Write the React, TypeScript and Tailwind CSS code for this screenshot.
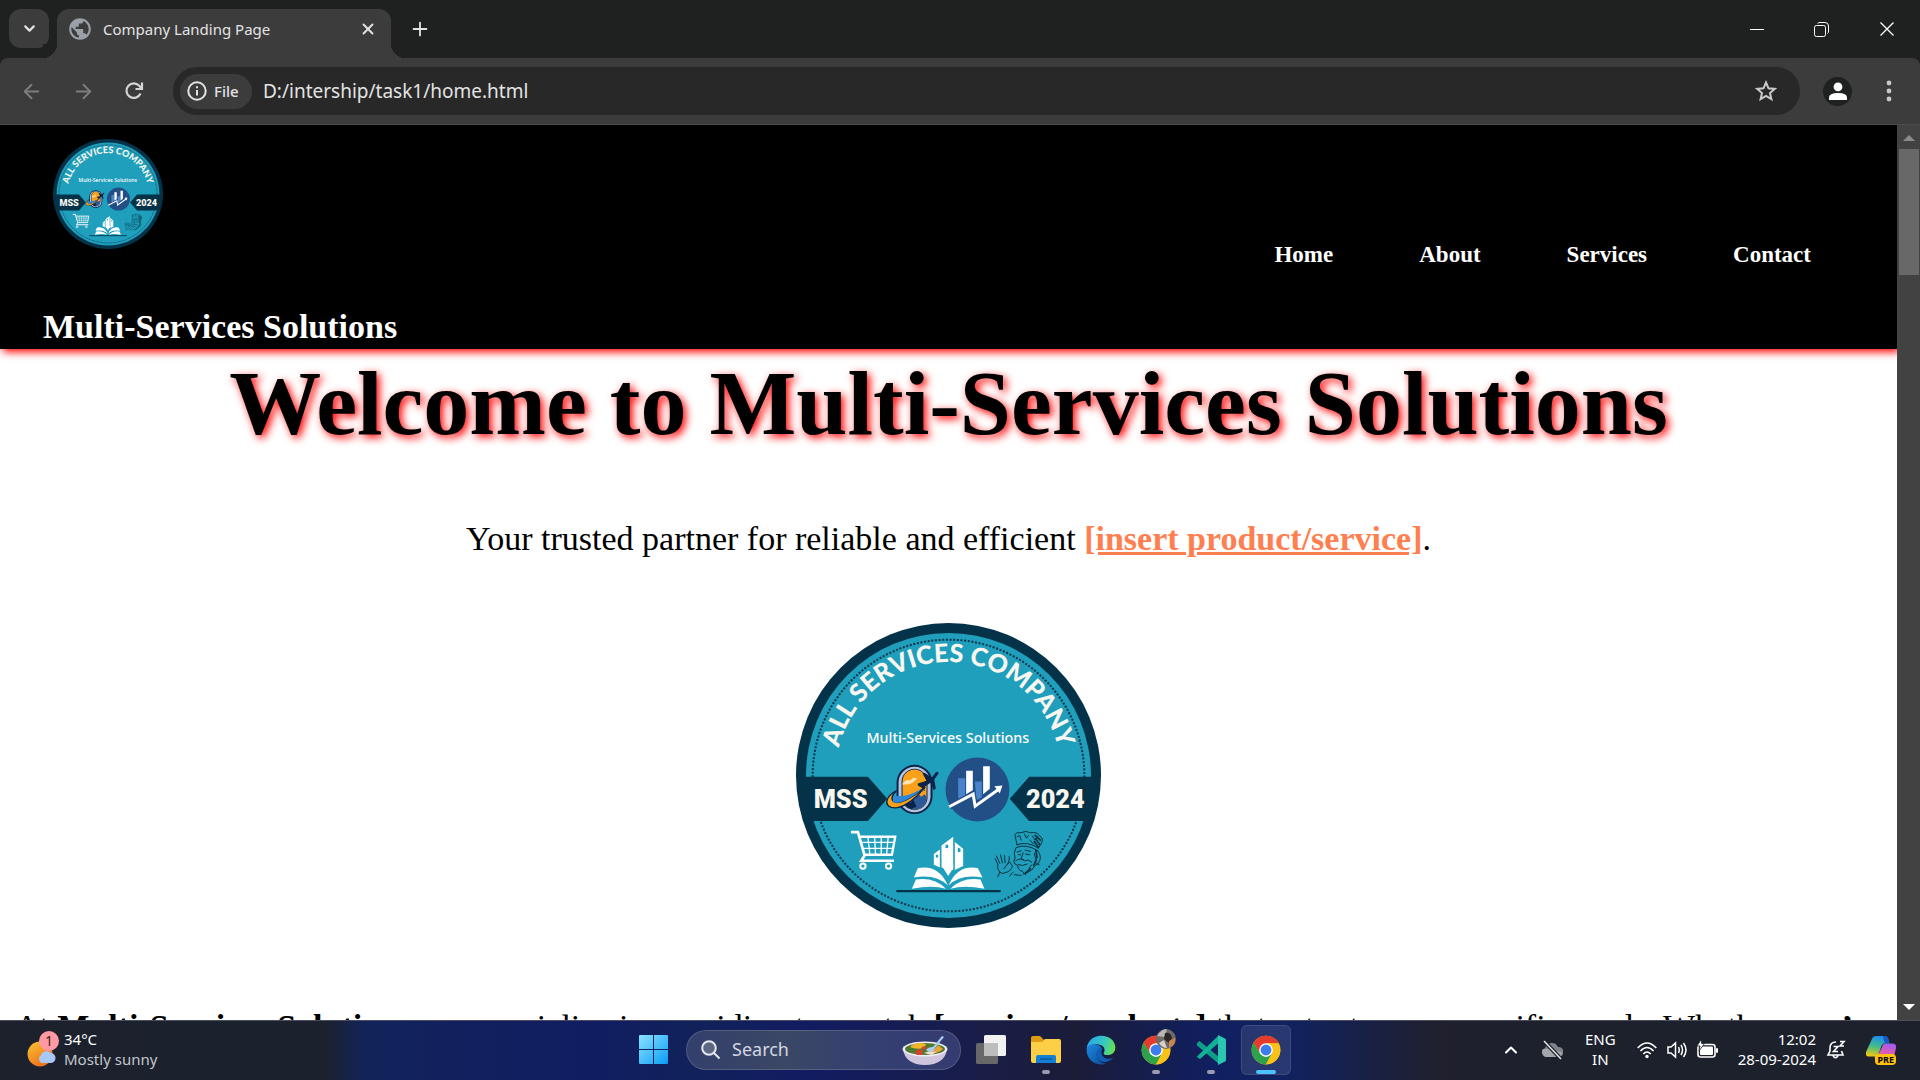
import React, { useId } from "react";
import { ChevronDown, ChevronUp, Plus, X, ArrowLeft, ArrowRight } from "lucide-react";
import { MdPublic } from "react-icons/md";

const dark = "#043249";
const cream = "#f8f6ee";

function CompanyLogo({ className }: { className: string }) {
  const id = useId();
  const arc = `arc${id}`;
  const capsule = `capsule${id}`;
  return (
    <svg className={className} viewBox="48 38 916 916" role="img" aria-label="All Services Company">
      <defs>
        <path id={arc} d="M168 520 A339 339 0 1 1 844 520" />
        <clipPath id={capsule}>
          <rect x="368" y="478" width="72" height="120" rx="36" />
        </clipPath>
      </defs>
      <circle cx="506" cy="496" r="458" fill={dark} />
      <circle cx="506" cy="496" r="428" fill="#1f9fbc" />
      <circle cx="506" cy="496" r="408" fill="none" stroke={dark} strokeWidth="6" strokeDasharray="6 5" />
      <text fill={cream} fontFamily="Lato, 'Open Sans', sans-serif" fontWeight="900" fontSize="76" textAnchor="middle">
        <textPath href={`#${arc}`} startOffset="50%">ALL SERVICES COMPANY</textPath>
      </text>
      <text x="504" y="397" fill="#fff" fontFamily="'Noto Sans', sans-serif" fontWeight="500" fontSize="43" textAnchor="middle">
        Multi-Services Solutions
      </text>
      <path d="M62 500 H264 L322 566 L264 633 H76 Z" fill={dark} />
      <path d="M950 500 H748 L690 566 L748 633 H936 Z" fill={dark} />
      <text x="182" y="595" fill={cream} fontFamily="Roboto, sans-serif" fontWeight="900" fontSize="76" textAnchor="middle">MSS</text>
      <text x="827" y="595" fill={cream} fontFamily="Roboto, sans-serif" fontWeight="900" fontSize="76" textAnchor="middle">2024</text>

      {/* travel badge */}
      <rect x="350" y="464" width="108" height="148" rx="54" fill="#0c2348" />
      <rect x="356" y="470" width="96" height="136" rx="48" fill="#b5c7e6" />
      <rect x="365" y="476" width="78" height="124" rx="39" fill="#0c2348" />
      <g clipPath={`url(#${capsule})`}>
        <rect x="366" y="476" width="76" height="124" fill="#f9a11b" />
        <path d="M366 522 Q376 508 392 510 Q402 498 412 506 L402 514 Q394 524 366 524Z" fill="#fde3b0" />
        <path d="M366 574 L384 556 L394 560 L410 544 L424 560 L434 552 L444 566 V600 H366Z" fill="#2c5a99" />
        <path d="M376 570 L386 562 L392 580 L400 568 L410 590 L390 598 L368 586Z" fill="#0c2348" />
      </g>
      <path d="M350 541 C318 558 312 584 334 592 C362 600 402 572 436 530 C400 562 362 582 344 576 C332 570 334 556 350 541Z" fill="#f9a11b" stroke="#0c2348" strokeWidth="4" />
      <path d="M346 556 C334 570 336 580 354 578 C378 574 406 556 428 534 C398 552 370 562 346 556Z" fill="#2f86d6" />
      <path d="M414 520 L440 512 L428 490 L434 488 L456 502 L468 486 Q476 482 476 490 L463 508 L468 534 L462 540 L452 518 L434 530 L434 544 L428 534 L414 526Z" fill="#0c2348" />

      {/* growth badge */}
      <circle cx="593" cy="538" r="96" fill="#214f86" />
      <path d="M535 504 H556 V556 L535 566Z M585 514 H606 V562 L590 570Z" fill="#4a83cb" />
      <path d="M559 482 H579 V540 L559 552Z M610 468 H630 V536 L610 552Z" fill="#fff" />
      <path d="M510 590 L580 552 L586 586 L656 538" fill="none" stroke="#214f86" strokeWidth="16" />
      <path d="M508 590 L580 552 L586 588 L656 538" fill="none" stroke="#fff" strokeWidth="9" />
      <path d="M644 528 L668 526 L660 550Z" fill="#fff" />

      {/* shopping cart */}
      <g fill="none" stroke="#fff" strokeWidth="6">
        <path d="M213 666 H234 L254 736 L244 752 H342" strokeWidth="8" />
        <path d="M240 680 H346 L336 734 H254" strokeWidth="7" />
        <path d="M246 697 H342 M250 715 H338 M264 680 L270 734 M284 680 L287 734 M304 680 V734 M325 680 L320 734" strokeWidth="4" />
        <circle cx="249" cy="768" r="8" />
        <circle cx="326" cy="768" r="8" />
      </g>

      {/* book with buildings */}
      <path d="M462 732 L480 718 V772 L462 764Z M485 706 L520 680 V780 L485 772Z M525 696 L550 716 V768 L525 780Z" fill="#fff" />
      <path d="M497 704 H505 V714 H497Z M534 712 L542 716 V726 H534Z M468 734 H475 V742 H468Z" fill="#1f9fbc" />
      <path d="M504 826 Q476 762 414 774 L402 802 Q468 790 504 826Z M506 826 Q534 762 594 774 L608 802 Q542 790 506 826Z" fill="#fff" />
      <path d="M498 836 Q464 800 408 808 L396 836 Q458 824 498 836Z M512 836 Q546 800 602 808 L614 836 Q552 824 512 836Z" fill="#fff" />
      <path d="M490 774 L505 798 L520 774 L520 760 H490Z" fill="#fff" />
      <path d="M352 843 H660" stroke={dark} strokeWidth="7" strokeLinecap="round" />

      {/* chef */}
      <g fill="none" stroke="#07303f" strokeWidth="3" strokeLinecap="round" strokeLinejoin="round">
        <path d="M712 704 L706 678 Q704 666 722 668 Q740 660 752 668 Q772 664 780 678 Q792 684 786 698 L776 714" />
        <path d="M712 680 L720 676 L724 690 M734 672 L740 684 L746 676 M758 678 L766 690 L774 680 M750 690 L762 702 M712 704 Q742 692 776 714 M710 712 Q740 700 774 722" />
        <path d="M766 676 L782 690 M768 686 L780 704 M764 694 L776 712" strokeWidth="5" />
        <path d="M708 714 Q700 730 706 744 L702 754 Q704 764 714 766 Q714 780 728 784 L738 794 M774 722 Q786 738 780 752 Q776 764 766 766 Q758 782 742 788 L730 792" />
        <path d="M712 726 L724 722 M736 720 L752 724 M716 734 L722 734 M738 732 L750 734 M730 728 L724 746 L732 750 M708 752 Q722 742 734 752 Q746 746 756 756 M716 764 Q728 770 742 762 M764 730 L768 746 M756 764 L748 774 M768 758 L778 764" />
        <path d="M768 720 L772 742 M770 748 L762 766 M752 776 L736 790" strokeWidth="5" />
        <path d="M654 800 L660 786 Q650 776 654 762 L646 746 M660 760 L650 738 M668 758 L662 734 M676 758 L674 736 M682 764 Q692 748 688 740 M660 786 Q668 794 676 788 Q694 784 698 768 L690 756 Q680 764 672 776 M700 786 L690 798 M704 794 L724 796" />
      </g>
    </svg>
  );
}

function ChromeIcon({ className }: { className: string }) {
  return (
    <svg className={className} viewBox="0 0 48 48" aria-hidden="true">
      <circle cx="24" cy="24" r="23" fill="#fbc116" />
      <path d="M24 13 H44.2 L43.9 12.5 A23 23 0 0 0 4.1 12.5 L14.5 29.5Z" fill="#e33b2e" />
      <path d="M4.1 12.5 A23 23 0 0 0 24 47 L33.5 29.5 L24 24 L14.5 29.5Z" fill="#2da14c" />
      <path d="M24 47 A23 23 0 0 0 44.2 13 H24 L33.5 29.5Z" fill="#fbc116" />
      <circle cx="24" cy="24" r="11" fill="#fff" />
      <circle cx="24" cy="24" r="8.7" fill="#3b7ded" />
    </svg>
  );
}

function EdgeIcon() {
  return (
    <svg className="size-[30px]" viewBox="0 0 48 48" aria-hidden="true">
      <defs>
        <linearGradient id="edgeTop" x1="0" x2="1" y1="0.3" y2="0.5">
          <stop offset="0" stopColor="#2aa5e8" />
          <stop offset="0.6" stopColor="#35c8c4" />
          <stop offset="1" stopColor="#6be04c" />
        </linearGradient>
        <linearGradient id="edgeLow" x1="0" x2="1" y1="0" y2="1">
          <stop offset="0" stopColor="#1c8be0" />
          <stop offset="1" stopColor="#0b4a98" />
        </linearGradient>
      </defs>
      <path d="M1 22 C2 9 12 1 24 1 C38 1 47 10 47 20 C47 28 41 32 35 32 C29 32 27 30 29 27 C31 23 29 16 20 15 C11 14 4 17 1 22Z" fill="url(#edgeTop)" />
      <path d="M1 24 C1 17 9 13 16 15 C22 16 26 20 26 24 C20 22 15 28 18 36 C21 43 29 47 33 45 C30 47 27 47 24 47 C11 47 1 37 1 24Z" fill="url(#edgeLow)" />
      <path d="M26 21 C19 20 14 29 18 36 C23 46 36 45 44 36 C38 39 31 39 27 34 C24 30 24 26 26 21Z" fill="#0e5fb5" />
    </svg>
  );
}

function BrowserChrome() {
  return (
    <header className="shrink-0 bg-[#1f2120] font-['Noto_Sans',sans-serif] text-[#e3e3e3]">
      <div className="flex h-[58px] items-start pt-[9px] pl-[9px]">
        <button aria-label="Search tabs" className="flex h-[39px] w-10 items-center justify-center rounded-xl bg-[#3c3c3c]">
          <ChevronDown size={17} strokeWidth={3} />
        </button>
        <div className="relative ml-2 flex h-[49px] w-[334px] items-center rounded-t-xl bg-[#3c3c3c] pr-3.5 pb-[9px] pl-2.5">
          <span className="absolute bottom-0 -left-3.5 size-3.5 bg-[radial-gradient(circle_at_0_0,#1f2120_14px,#3c3c3c_14px)]" />
          <span className="absolute -right-3.5 bottom-0 size-3.5 bg-[radial-gradient(circle_at_100%_0,#1f2120_14px,#3c3c3c_14px)]" />
          <MdPublic size={26} className="shrink-0 text-[#9aa0a8]" />
          <span className="ml-2.5 flex-1 text-[15px]">Company Landing Page</span>
          <button aria-label="Close tab"><X size={18} strokeWidth={2.5} /></button>
        </div>
        <button aria-label="New tab" className="ml-[18px] flex h-10 items-center"><Plus size={22} strokeWidth={2} /></button>
        <div className="mr-px ml-auto flex h-10 items-center text-white">
          <button aria-label="Minimize" className="flex w-[65px] justify-center"><span className="h-px w-3.5 bg-white" /></button>
          <button aria-label="Restore" className="flex w-[65px] justify-center">
            <svg className="size-[15px]" viewBox="0 0 15 15" fill="none" stroke="currentColor" aria-hidden="true">
              <rect x="0.5" y="3.5" width="11" height="11" rx="2" />
              <path d="M3.5 1.5 Q4 0.5 6 0.5 H11 Q14.5 0.5 14.5 4 V9 Q14.5 11 13.5 11.5" />
            </svg>
          </button>
          <button aria-label="Close window" className="flex w-[65px] justify-center">
            <svg className="size-3.5" viewBox="0 0 14 14" fill="none" stroke="currentColor" strokeWidth="1.3" aria-hidden="true"><path d="M0.5 0.5 L13.5 13.5 M13.5 0.5 L0.5 13.5" /></svg>
          </button>
        </div>
      </div>
      <div className="flex h-[67px] items-center rounded-t-lg border-b border-[#4b4b4b] bg-[#3c3c3c]">
        <div className="flex w-[173px] items-center gap-[29px] pl-5">
          <button aria-label="Back" className="text-[#7d7d7d]"><ArrowLeft size={23} strokeWidth={2} /></button>
          <button aria-label="Forward" className="text-[#7d7d7d]"><ArrowRight size={23} strokeWidth={2} /></button>
          <button aria-label="Reload" className="text-[#d5d5d5]">
            <svg className="size-5" viewBox="0 0 20 20" fill="none" stroke="currentColor" strokeWidth="2.2" aria-hidden="true">
              <path d="M16.5 12.5 A7.3 7.3 0 1 1 15.6 5.2 L17 7" />
              <path d="M18 1.5 V8 H11.5" />
            </svg>
          </button>
        </div>
        <div className="flex h-12 flex-1 items-center rounded-full bg-[#282828] pr-[23px] pl-[7px]">
          <button className="flex h-[35px] w-[72px] items-center gap-[7px] rounded-full bg-[#3c3c3c] pl-[7px] text-[15px] font-medium">
            <svg className="size-5" viewBox="0 0 20 20" fill="none" stroke="currentColor" strokeWidth="2" aria-hidden="true">
              <circle cx="10" cy="10" r="8.7" />
              <path d="M10 9 V14.5 M10 5.3 V7.3" />
            </svg>
            File
          </button>
          <input aria-label="Address" defaultValue="D:/intership/task1/home.html" className="ml-[11px] min-w-0 flex-1 bg-transparent text-[19px] outline-none" />
          <button aria-label="Bookmark" className="text-[#c9c9c9]">
            <svg className="size-[22px]" viewBox="0 0 22 22" fill="none" stroke="currentColor" strokeWidth="2" aria-hidden="true">
              <path d="M11 2.5 L13.5 8.3 L19.7 8.9 L15 13 L16.4 19.2 L11 15.9 L5.6 19.2 L7 13 L2.3 8.9 L8.5 8.3Z" />
            </svg>
          </button>
        </div>
        <button aria-label="Profile" className="ml-[23px] flex size-[29px] items-center justify-center rounded-full bg-[#1f2120]">
          <svg className="size-5" viewBox="0 0 20 20" fill="#fff" aria-hidden="true"><circle cx="10" cy="5.8" r="4.4" /><path d="M1 19 V16.5 Q1 12 10 12 Q19 12 19 16.5 V19Z" /></svg>
        </button>
        <button aria-label="Menu" className="mr-[26px] ml-[32px]">
          <svg className="h-[22px] w-[10px]" viewBox="0 0 10 22" fill="#c9c9c9" aria-hidden="true"><circle cx="5" cy="3" r="2.4" /><circle cx="5" cy="11" r="2.4" /><circle cx="5" cy="19" r="2.4" /></svg>
        </button>
      </div>
    </header>
  );
}

const links = ["Home", "About", "Services", "Contact"];

function LandingPage() {
  return (
    <div className="min-w-0 flex-1 overflow-hidden bg-white font-['Liberation_Serif',serif] text-black">
      <header className="flex items-center justify-between bg-black pr-[86px] pb-0.5 pl-[43px] text-white shadow-[3px_3px_8px_#ff0000]">
        <div className="pt-3.5">
          <CompanyLogo className="ml-2.5 size-[110px]" />
          <h2 className="mt-[58px] text-[34px] leading-10 font-bold">Multi-Services Solutions</h2>
        </div>
        <nav className="pt-[38px]">
          <ul className="flex gap-[86px] text-[23px] leading-8 font-bold">
            {links.map((link) => (
              <li key={link}><a href={`#${link.toLowerCase()}`}>{link}</a></li>
            ))}
          </ul>
        </nav>
      </header>
      <main className="flex flex-col items-center pt-0.5">
        <h1 className="text-[92px] leading-[104px] font-bold whitespace-nowrap [text-shadow:3px_3px_8px_#ff0000]">Welcome to Multi-Services Solutions</h1>
        <p className="mt-16 text-[34px] leading-10">
          Your trusted partner for reliable and efficient <strong className="text-[#ff7f50] underline">[insert product/service]</strong>.
        </p>
        <CompanyLogo className="mt-16 size-[305px]" />
        <p className="mt-[79px] text-[34px] leading-10 whitespace-nowrap">
          At <b>Multi-Services Solutions</b>, we specialize in providing top-notch <b>[services/products]</b> that cater to your specific needs. Whether <b>you’re</b>
        </p>
      </main>
    </div>
  );
}

function Scrollbar() {
  return (
    <div className="flex w-[23px] flex-col items-center bg-[#424242]">
      <svg className="mt-2.5 h-[6px] w-3" viewBox="0 0 12 6" fill="#8b8b8b" aria-hidden="true"><path d="M0 6 L6 0 L12 6Z" /></svg>
      <div className="mt-2 h-[126px] w-5 bg-[#686868]" />
      <svg className="mt-auto mb-2.5 h-[6px] w-3" viewBox="0 0 12 6" fill="#fff" aria-hidden="true"><path d="M0 0 L6 6 L12 0Z" /></svg>
    </div>
  );
}

function AppTile({ label, state, children }: { label: string; state?: "open" | "active"; children: React.ReactNode }) {
  return (
    <button
      aria-label={label}
      className={`relative flex size-[50px] items-center justify-center rounded-md border ${state === "active" ? "border-white/10 bg-white/10" : "border-transparent"}`}
    >
      {children}
      {state === "open" && <span className="absolute bottom-0 h-1 w-2 rounded-full bg-[#9a9bb0]" />}
      {state === "active" && <span className="absolute bottom-0 h-1 w-5 rounded-full bg-[#4cc2ff]" />}
    </button>
  );
}

function Taskbar() {
  return (
    <footer className="grid h-[60px] shrink-0 grid-cols-[1fr_auto_1fr] items-center border-t border-[#4a4e5e] bg-[linear-gradient(90deg,#1c212c_0%,#1b222e_17%,#12235a_19%,#111d62_31%,#11225a_36%,#121c62_42%,#1a1d45_52%,#1b1c38_56%,#101f60_63%,#102260_67%,#1a2040_72%,#20202e_75%,#1c212c_80%)] pb-0.5 font-['Noto_Sans',sans-serif] text-white">
      <button className="flex items-center justify-self-start pl-[26px] text-left">
        <span className="relative size-[38px]">
          <svg className="size-[38px]" viewBox="0 0 38 38" aria-hidden="true">
            <defs><linearGradient id="sun" x1="0" x2="0.6" y1="0" y2="1"><stop offset="0" stopColor="#f6c431" /><stop offset="1" stopColor="#f06f1c" /></linearGradient></defs>
            <circle cx="14" cy="23" r="12.5" fill="url(#sun)" />
            <path d="M16 32 A4.5 4.5 0 0 1 15 24 A6 6 0 0 1 25 22 A5 5 0 0 1 24 32Z" fill="#a8c8f8" />
          </svg>
          <span className="absolute top-0 left-[13px] flex size-5 items-center justify-center rounded-full bg-[#ff99a4] text-[14px] text-[#3a1d20]">1</span>
        </span>
        <span className="pb-0.5 text-[15px] leading-5">
          <span className="block">34°C</span>
          <span className="block text-[#c3c6cc]">Mostly sunny</span>
        </span>
      </button>

      <div className="flex items-center gap-[5px]">
        <AppTile label="Start">
          <svg className="size-[30px]" viewBox="0 0 30 30" aria-hidden="true">
            <defs><linearGradient id="win" x1="0" x2="1" y1="0" y2="1"><stop offset="0" stopColor="#8ce3ff" /><stop offset="1" stopColor="#0a9cf5" /></linearGradient></defs>
            <path d="M0 1 Q0 0 1 0 H14 V14 H0Z M15 0 H28 Q29 0 29 1 V14 H15Z M0 15 H14 V29 H1 Q0 29 0 28Z M15 15 H29 V28 Q29 29 28 29 H15Z" fill="url(#win)" />
          </svg>
        </AppTile>
        <label className="ml-0.5 flex h-10 w-[275px] items-center rounded-full border border-white/15 bg-[linear-gradient(90deg,#333f6c,#3a4765_35%,#343f72_70%,#343b70)] pr-3 pl-3.5">
          <svg className="size-5 shrink-0" viewBox="0 0 20 20" fill="#5c6784" stroke="#e6e8ee" strokeWidth="2" aria-hidden="true"><circle cx="8" cy="8" r="6.8" /><path d="M13 13 L18.5 18.5" /></svg>
          <input aria-label="Search" placeholder="Search" className="ml-[11px] w-0 flex-1 bg-transparent text-[18px] outline-none placeholder:text-[#d3d6e0]" />
          <svg className="h-[30px] w-[46px]" viewBox="0 0 46 30" aria-hidden="true">
            <path d="M1 14 C2 24 10 30 23 30 C36 30 44 24 45 14Z" fill="#cfc6de" />
            <ellipse cx="23" cy="14" rx="22.5" ry="7.5" fill="#f0ecf5" />
            <ellipse cx="23" cy="14" rx="20" ry="6" fill="#4f7a32" />
            <path d="M8 12 Q14 6 24 9 L22 13 Q14 15 8 12Z" fill="#efb52b" />
            <path d="M13 17 l4 -3 4 2 -1 4 -5 0Z M19 13 l3 -2 3 2 -3 2Z" fill="#d8402f" />
            <path d="M29 18 Q36 19 41 14 L36 10Z" fill="#e9a13a" />
            <path d="M22 18 Q28 15 34 17 L30 20Z" fill="#f5dccb" />
            <path d="M24 15 Q26 12 31 12 L40 1 L42 2 L33 13 Q32 17 27 17Z" fill="#a9cff0" />
          </svg>
        </label>
        <AppTile label="Task view">
          <svg className="size-[30px]" viewBox="0 0 30 30" aria-hidden="true">
            <rect x="0" y="8" width="22" height="21" rx="1.5" fill="#686868" />
            <rect x="8" y="0" width="22" height="21" rx="1.5" fill="#f2f2f2" />
            <path d="M8 8 H22 V21 H9.500 Q8 21 8 19.500Z" fill="#bdbdbd" />
          </svg>
        </AppTile>
        <AppTile label="File Explorer" state="open">
          <svg className="size-[30px]" viewBox="0 0 30 30" aria-hidden="true">
            <path d="M0 3 Q0 1 2 1 H9 L13 5 V10 H0Z" fill="#dd9c12" />
            <path d="M0 7 H11 L14 4 H28 Q30 4 30 6 V26 Q30 28 28 28 H2 Q0 28 0 26Z" fill="#fdcf46" />
            <path d="M5 28 V22 Q5 20 7 20 H23 Q25 20 25 22 V28Z" fill="#1280d2" />
            <path d="M9 24 H21" stroke="#0b559c" strokeWidth="1.500" />
          </svg>
        </AppTile>
        <AppTile label="Edge"><EdgeIcon /></AppTile>
        <AppTile label="Chrome, personal profile" state="open">
          <ChromeIcon className="size-[30px]" />
          <svg className="absolute top-[3px] right-1 size-5" viewBox="0 0 20 20" aria-hidden="true">
            <circle cx="10" cy="10" r="10" fill="#6f6a68" />
            <path d="M1 7 Q5 0 11 0 L9 8Z" fill="#b9b6b4" />
            <path d="M9 4 Q15 3 16 9 L13 14 L8 10Z" fill="#2b2625" />
            <path d="M13 12 L19 9 Q20 16 13 19Z" fill="#c9854e" />
            <path d="M3 14 L8 11 L11 19 Q6 19 3 14Z" fill="#d8cfc9" />
          </svg>
        </AppTile>
        <AppTile label="VS Code" state="open">
          <svg className="size-[30px]" viewBox="0 0 30 30" aria-hidden="true">
            <path d="M1 8 L3.500 6 L23 22 V29 L1 10.500Z" fill="#0f9f86" />
            <path d="M1 21.500 L22 1 V8.500 L4 24 L1 22Z" fill="#12b096" />
            <path d="M22 0 L29 3.500 Q30 4 30 5 V25 Q30 26 29 26.500 L22 30Z" fill="#2ac6ad" />
          </svg>
        </AppTile>
        <AppTile label="Chrome" state="active"><ChromeIcon className="size-[30px]" /></AppTile>
      </div>

      <div className="flex items-center justify-self-end pr-6 text-[15px] leading-5">
        <button aria-label="Show hidden icons" className="mr-[20px]"><ChevronUp size={20} strokeWidth={2.5} /></button>
        <button aria-label="OneDrive" className="mr-[22px]">
          <svg className="h-5 w-[22px]" viewBox="0 0 22 20" aria-hidden="true">
            <path d="M5 17 A5 5 0 0 1 4 8 A7 7 0 0 1 17 7 A5 5 0 0 1 18 17Z" fill="#7f838b" />
            <path d="M5 17 A5 5 0 0 1 2 9 Q8 8 13 11 L21 12 Q21 17 17 17Z" fill="#a3a6ad" />
            <path d="M3 1 L20 19" stroke="#1c212c" strokeWidth="4" />
            <path d="M3 1 L20 19" stroke="#e6e6e6" strokeWidth="1.500" />
          </svg>
        </button>
        <button className="mr-[21px] pb-0.5 text-center"><span className="block">ENG</span><span className="block">IN</span></button>
        <button aria-label="Network, volume and battery" className="mr-5 flex items-center gap-2.5">
          <svg className="size-5" viewBox="0 0 20 20" fill="none" stroke="#fff" strokeWidth="1.6" aria-hidden="true">
            <path d="M0.700 8 Q10 -2 19.300 8 M3.500 11 Q10 4 16.500 11 M6.300 14 Q10 10 13.700 14" />
            <circle cx="10" cy="16.500" r="1.700" fill="#fff" stroke="none" />
          </svg>
          <svg className="size-5" viewBox="0 0 20 20" fill="none" stroke="#fff" strokeWidth="1.500" aria-hidden="true">
            <path d="M1 7 H4 L8.500 3 V17 L4 13 H1Z M11.500 7 Q13 10 11.500 13 M14 5 Q17 10 14 15 M16.500 3 Q21.500 10 16.500 17" />
          </svg>
          <svg className="size-[21px]" viewBox="0 0 21 21" aria-hidden="true">
            <rect x="1" y="5.500" width="17" height="12.500" rx="2.500" fill="none" stroke="#fff" strokeWidth="1.600" />
            <rect x="3" y="7.500" width="13" height="8.500" rx="1" fill="#fff" />
            <rect x="19" y="9" width="2" height="5" rx="1" fill="#fff" />
            <path d="M4.500 0 L0 7 H3 L2 12 L7.500 4.500 H4.500Z" fill="#fff" stroke="#1c212c" strokeWidth="0.800" />
          </svg>
        </button>
        <button className="mr-2.5 pb-0.5 text-right"><span className="block">12:02</span><span className="block">28-09-2024</span></button>
        <button aria-label="Notifications" className="mr-5">
          <svg className="size-5" viewBox="0 0 20 20" fill="none" stroke="#fff" strokeWidth="1.600" aria-hidden="true">
            <path d="M10 2 Q4 2 4 8 V11 L2 15 H17 L15.500 11 M7 15.500 Q9.500 20 12 15.500" />
            <path d="M7.500 6.500 H12 L7.500 11.500 H12 M14 1.500 H18 L14 6 H18" />
          </svg>
        </button>
        <button aria-label="Copilot preview" className="relative size-[30px]">
          <svg className="size-[30px]" viewBox="0 0 32 30" aria-hidden="true">
            <defs>
              <linearGradient id="copA" x1="0.500" x2="0.300" y1="0" y2="1"><stop offset="0" stopColor="#1b8df0" /><stop offset="0.500" stopColor="#3fbd8a" /><stop offset="1" stopColor="#f3c811" /></linearGradient>
              <linearGradient id="copB" x1="0.600" x2="0.300" y1="0" y2="1"><stop offset="0" stopColor="#a45af0" /><stop offset="0.600" stopColor="#ee5da0" /><stop offset="1" stopColor="#fb9358" /></linearGradient>
            </defs>
            <path d="M7 2 Q8 0 11 0 H20 Q23 0 24 4 L25 8 H20 Q17 8 16 12 L13 20 Q12 22 9 22 H3 Q-1 22 0 17Z" fill="url(#copA)" />
            <path d="M25 8 H28 Q33 8 32 13 L29 25 Q28 29 24 29 H14 Q11 29 10 25 L9 22 Q12 22 13 20 L17 12 Q18 8 21 8Z" fill="url(#copB)" />
            <path d="M18 0 H21 Q23 0 24 4 L25 8 H20Z" fill="#1857c4" />
          </svg>
          <span className="absolute right-0 bottom-0 rounded-sm bg-[#ffc20a] px-0.5 text-[9px] leading-[11px] font-bold text-black">PRE</span>
        </button>
      </div>
    </footer>
  );
}

export default function App() {
  return (
    <div className="flex h-screen flex-col overflow-hidden">
      <BrowserChrome />
      <div className="flex min-h-0 flex-1">
        <LandingPage />
        <Scrollbar />
      </div>
      <Taskbar />
    </div>
  );
}
